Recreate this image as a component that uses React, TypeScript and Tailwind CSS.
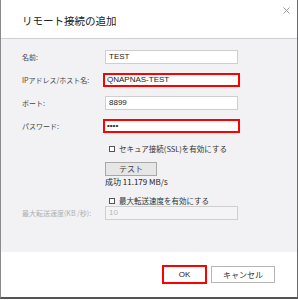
const font = { fontFamily: '"Noto Sans CJK JP", "Liberation Sans", sans-serif' };

function Field({ label, value, highlight = false, disabled = false }: { label: string; value: string; highlight?: boolean; disabled?: boolean }) {
  return (
    <div className="flex items-center h-[14px]">
      <div className={`w-[83px] text-[7px] leading-none ${disabled ? 'text-[#b0b0b0]' : 'text-[#444]'}`}>{label}</div>
      {highlight ? (
        <div className="-ml-[2px] w-[137px] h-[14px] border-2 border-[#ff0000] bg-white flex items-center pl-[2px] text-[8px] text-[#222] font-['Liberation_Sans',sans-serif]">
          {value}
        </div>
      ) : (
        <div className={`w-[133px] h-[14px] border border-[#cfcfcf] flex items-center pl-[3px] text-[8px] font-['Liberation_Sans',sans-serif] ${disabled ? 'bg-[#f4f4f6] text-[#b8b8b8]' : 'bg-white text-[#222]'}`}>
          {value}
        </div>
      )}
    </div>
  );
}

function Check({ label }: { label: string }) {
  return (
    <div className="flex items-center gap-[4px] pl-[4px]">
      <div className="w-[6px] h-[6px] border border-[#555] bg-white" />
      <span className="text-[7.5px] leading-none text-[#333]">{label}</span>
    </div>
  );
}

export default function App() {
  return (
    <div style={font} className="w-[298px] h-[299px] flex flex-col border-l border-r border-b-2 border-l-[#8a8a8a] border-r-[#6a6a6a] border-b-[#555] bg-white">
      <div className="relative h-[39px] shrink-0 border-b border-[#cfcfcf] bg-white flex items-center pl-[21px] pt-[4px]">
        <span className="text-[10.5px] text-[#222] leading-none">リモート接続の追加</span>
        <svg className="absolute right-[7px] top-[7px]" width="7" height="7" viewBox="0 0 7 7">
          <path d="M0.5 0.5L6.5 6.5M6.5 0.5L0.5 6.5" stroke="#9a9a9a" strokeWidth="1" />
        </svg>
      </div>

      <div className="flex-1 bg-[#f2f2f4] pl-[21px] pt-[11px] flex flex-col">
        <div className="flex flex-col gap-[9px]">
          <Field label="名前:" value="TEST" />
          <Field label="IPアドレス/ホスト名:" value="QNAPNAS-TEST" highlight />
          <Field label="ポート:" value="8899" />
          <Field label="パスワード:" value="••••" highlight />
        </div>
        <div className="pl-[83px] flex flex-col">
          <div className="mt-[10px] h-[12px] flex items-center">
            <Check label="セキュア接続(SSL)を有効にする" />
          </div>
          <button className="mt-[7px] w-[52px] h-[14px] border border-[#a8a8a8] bg-[#e6e6e6] text-[8px] text-[#444] leading-none flex items-center justify-center">
            テスト
          </button>
          <div className="h-[11px] flex items-center text-[8px] text-[#222] leading-none">成功 11.179 MB/s</div>
          <div className="mt-[10px] h-[8px] flex items-center">
            <Check label="最大転送速度を有効にする" />
          </div>
        </div>
        <div className="mt-[1px]">
          <Field label="最大転送速度(KB /秒):" value="10" disabled />
        </div>
      </div>

      <div className="h-[45px] shrink-0 bg-white flex items-center justify-end gap-[4px] pr-[22px]">
        <button className="w-[45px] h-[19px] border-2 border-[#ff0000] bg-white text-[8px] text-[#222] leading-none flex items-center justify-center font-['Liberation_Sans',sans-serif]">
          OK
        </button>
        <button className="w-[64px] h-[17px] border border-[#b5b5b5] bg-white text-[8px] text-[#333] leading-none flex items-center justify-center">
          キャンセル
        </button>
      </div>
    </div>
  );
}
